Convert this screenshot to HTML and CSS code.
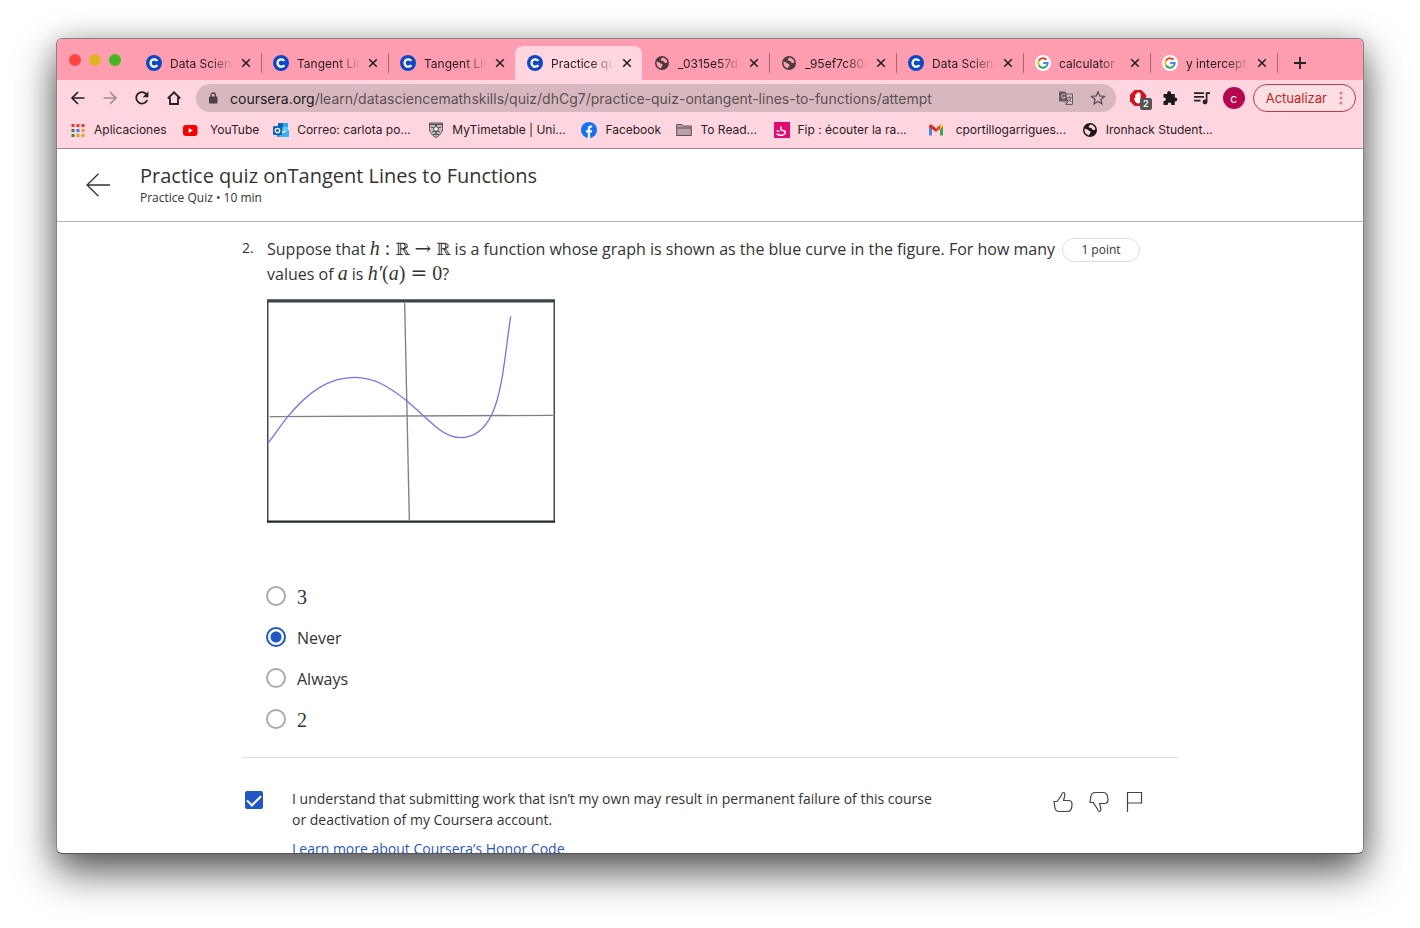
FILE: index.html
```html
<!DOCTYPE html>
<html lang="en">
<head>
<meta charset="utf-8">
<title>Practice quiz onTangent Lines to Functions</title>
<link rel="stylesheet" href="styles.css">
</head>
<body>
<svg class="sprite" aria-hidden="true">
  <symbol id="coursera" viewBox="0 0 16 16"><circle cx="8" cy="8" r="8" fill="#1047c4"/><path d="M11.3 5.9A3.7 3.7 0 1 0 11.3 10.1" fill="none" stroke="#fff" stroke-width="2.3"/></symbol>
  <symbol id="globe" viewBox="0 0 16 16"><circle cx="8" cy="8" r="7" fill="currentColor"/><path d="M2.6 6.6c1.600 1.100 2.800.4 3.700 1.700.8 1.100 2.100.5 2.200 1.600.1 1.300-1.200 1.300-1.500 3.500-2.700-.4-5-2.900-4.400-6.800zM8.200 2.600c-.3 1.200-1.700 1.300-1.500 2.400.3 1.300 2.600.5 3.200 1.700.5 1.300 2 1.500 3.500.9-.2-2.700-2.400-4.900-5.200-5z" fill="var(--hole)"/></symbol>
  <symbol id="google" viewBox="0 0 16 16"><circle cx="8" cy="8" r="8" fill="#fff"/><g fill="none" stroke-width="2"><path d="M11.500 4.700A4.800 4.800 0 0 0 3.800 5.700" stroke="#ea4335"/><path d="M3.800 5.700a4.800 4.800 0 0 0 0 4.600" stroke="#fbbc05"/><path d="M3.800 10.300a4.800 4.800 0 0 0 7.400 1.200" stroke="#34a853"/><path d="M11.200 11.500A4.700 4.700 0 0 0 12.700 8H8.200" stroke="#4285f4"/></g></symbol>
  <symbol id="close" viewBox="0 0 10 10"><path d="M1.200 1.200l7.600 7.600M8.800 1.200L1.200 8.800" stroke="#222" stroke-width="1.600"/></symbol>
</svg>

<div class="window">
  <div class="tabstrip">
    <div class="lights"><span class="light red"></span><span class="light yellow"></span><span class="light green"></span></div>
    <div class="tabs">
      <div class="tab"><svg class="fav"><use href="#coursera"/></svg><span class="tab-title">Data Science</span><button class="close" aria-label="Close tab"><svg><use href="#close"/></svg></button></div>
      <div class="tab"><svg class="fav"><use href="#coursera"/></svg><span class="tab-title">Tangent Lines</span><button class="close" aria-label="Close tab"><svg><use href="#close"/></svg></button></div>
      <div class="tab before-active"><svg class="fav"><use href="#coursera"/></svg><span class="tab-title">Tangent Lines</span><button class="close" aria-label="Close tab"><svg><use href="#close"/></svg></button></div>
      <div class="tab active"><svg class="fav"><use href="#coursera"/></svg><span class="tab-title">Practice quiz</span><button class="close" aria-label="Close tab"><svg><use href="#close"/></svg></button></div>
      <div class="tab"><svg class="fav dim"><use href="#globe"/></svg><span class="tab-title">_0315e57d8</span><button class="close" aria-label="Close tab"><svg><use href="#close"/></svg></button></div>
      <div class="tab"><svg class="fav dim"><use href="#globe"/></svg><span class="tab-title">_95ef7c80c1</span><button class="close" aria-label="Close tab"><svg><use href="#close"/></svg></button></div>
      <div class="tab"><svg class="fav"><use href="#coursera"/></svg><span class="tab-title">Data Science</span><button class="close" aria-label="Close tab"><svg><use href="#close"/></svg></button></div>
      <div class="tab"><svg class="fav"><use href="#google"/></svg><span class="tab-title">calculator - G</span><button class="close" aria-label="Close tab"><svg><use href="#close"/></svg></button></div>
      <div class="tab"><svg class="fav"><use href="#google"/></svg><span class="tab-title">y intercept c</span><button class="close" aria-label="Close tab"><svg><use href="#close"/></svg></button></div>
    </div>
    <button class="new-tab" aria-label="New tab"><svg viewBox="0 0 12 12"><path d="M6 0v12M0 6h12" stroke="#222" stroke-width="1.800"/></svg></button>
  </div>

  <div class="toolbar">
    <div class="nav">
      <button aria-label="Back"><svg viewBox="0 0 16 16"><path d="M14.500 8H2M8 2L2 8l6 6" fill="none" stroke="#222" stroke-width="1.700"/></svg></button>
      <button aria-label="Forward"><svg viewBox="0 0 16 16"><path d="M1.500 8H14M8 2l6 6-6 6" fill="none" stroke="#a28890" stroke-width="1.600"/></svg></button>
      <button aria-label="Reload"><svg viewBox="0 0 16 16"><path d="M13.200 10A5.700 5.700 0 1 1 12.300 4.200" fill="none" stroke="#222" stroke-width="1.800"/><path d="M14.400 1.200v6H8.600z" fill="#222"/></svg></button>
      <button aria-label="Home"><svg viewBox="0 0 16 16"><path d="M1.800 8.500L8 2.300l6.200 6.200M4 7.500V14h8V7.500" fill="none" stroke="#222" stroke-width="1.800"/></svg></button>
    </div>
    <div class="address">
      <svg class="lock" viewBox="0 0 10 12"><rect x="1" y="4.500" width="8.500" height="7" rx="1" fill="#4d4245"/><path d="M3 5V3.200a2.200 2.200 0 0 1 4.400 0V5" fill="none" stroke="#4d4245" stroke-width="1.300"/></svg>
      <span class="url"><span class="host">coursera.org</span>/learn/datasciencemathskills/quiz/dhCg7/practice-quiz-ontangent-lines-to-functions/attempt</span>
      <button aria-label="Translate"><svg viewBox="0 0 16 16"><path d="M6 4h8.500v10.500H8" fill="none" stroke="#655a5d"/><path d="M1 1.500h6.500l2.800 10H1z" fill="#655a5d"/><path d="M7 4.900A2 2 0 1 0 7.300 7H5.500" fill="none" stroke="#d8b8bf" stroke-width="1"/><path d="M9.500 7.500h4M11.500 6.500v1M13 7.500c-.4 2-1.500 3-2.500 3.700M10.500 9l2.700 3M8 11.500v3l2-3" fill="none" stroke="#655a5d" stroke-width=".9"/></svg></button>
      <button aria-label="Bookmark this page"><svg viewBox="0 0 16 16"><path d="M8 1.800l1.800 4.200 4.600.4-3.500 3 1.100 4.500L8 11.500l-4 2.400 1.100-4.500-3.500-3L6.200 6z" fill="none" stroke="#5d5054" stroke-width="1.300"/></svg></button>
    </div>
    <div class="extensions">
      <button class="blocker" aria-label="Ad blocker"><svg viewBox="0 0 16 16"><path d="M4.700 0h6.600L16 4.700v6.600L11.300 16H4.700L0 11.300V4.700z" fill="#d6101c"/><path d="M4 8.300l1.300-.6V4.400q.7-.9 1.300 0V2.900q.7-.9 1.300 0V2.500q.7-.8 1.400 0v1q.7-.8 1.300.1v6.900q0 3-2.700 3-2.100 0-3-2.400z" fill="#fff"/></svg><span class="badge">2</span></button>
      <button aria-label="Extensions"><svg viewBox="0 0 16 16"><path d="M1.500 4h3.700V3a1.900 1.900 0 0 1 3.800 0v1h3.800v3.600h.6a1.900 1.900 0 0 1 0 3.800h-.6V15H9.300v-.7a1.800 1.800 0 0 0-3.600 0v.7H1.500v-4h.7a1.700 1.700 0 0 0 0-3.400h-.7z" fill="#1d181a"/></svg></button>
      <button aria-label="Media controls"><svg viewBox="0 0 16 16"><path d="M0 3.200h10M0 6.900h10M0 10.600h6.500M12.600 12V3.200H16" fill="none" stroke="#222" stroke-width="1.700"/><circle cx="11" cy="12" r="2.400" fill="#222"/></svg></button>
      <button class="avatar" aria-label="Profile">c</button>
      <button class="update">Actualizar<svg viewBox="0 0 4 14"><g fill="#e4787c"><circle cx="2" cy="2" r="1.500"/><circle cx="2" cy="7" r="1.500"/><circle cx="2" cy="12" r="1.500"/></g></svg></button>
    </div>
  </div>

  <nav class="bookmarks">
    <a href="#"><svg viewBox="0 0 16 16"><path d="M1.500 2h3v3h-3zM6.500 2h3v3h-3zM11.500 2h3v3h-3z" fill="#e23b35"/><path d="M1.500 7h3v3h-3zM1.500 12h3v3h-3z" fill="#318a4a"/><path d="M6.500 7h3v3h-3z" fill="#3f7de8"/><path d="M6.500 12h3v3h-3zM11.500 7h3v3h-3zM11.500 12h3v3h-3z" fill="#eb9a27"/></svg>Aplicaciones</a>
    <a href="#" class="roomy"><svg viewBox="0 0 16 16"><rect x="1" y="3" width="14.500" height="11" rx="3" fill="#f40000"/><path d="M6.700 6l4 2.500-4 2.500z" fill="#fff"/></svg>YouTube</a>
    <a href="#"><svg viewBox="0 0 16 16"><path d="M5 1h10v8H5z" fill="#28a8ea"/><path d="M5 1h5v4H5z" fill="#0f64b7"/><path d="M10 5h5v4h-5z" fill="#50d0f5"/><path d="M4 8l6 3.500L16 8v7H4z" fill="#1784d8"/><path d="M4 15L16 8v7z" fill="#35b6f0"/><rect y="4" width="9" height="9" rx="1" fill="#0c63b8"/><circle cx="4.500" cy="8.500" r="2.200" fill="none" stroke="#fff" stroke-width="1.300"/></svg>Correo: carlota po...</a>
    <a href="#"><svg viewBox="0 0 16 16"><path d="M1.500 1h13v5.500c0 4-2.500 6.800-6.500 9-4-2.200-6.500-5-6.500-9z" fill="#c9bfc1" stroke="#50484a"/><path d="M2 2.500h12M3 5l3 1M13 5l-3 1M4 10l3-1M12 10l-3-1M5 12.500h6" stroke="#50484a"/><circle cx="8" cy="7" r="2.300" fill="#fff" stroke="#50484a"/><path d="M7 3.500h2M8 9v4" stroke="#50484a" stroke-width="1.500"/></svg>MyTimetable | Uni...</a>
    <a href="#"><svg viewBox="0 0 16 16"><circle cx="8" cy="8" r="8" fill="#1672ec"/><path d="M6.800 16v-5.400H4.900V8.200h1.900V6.600c0-2.100 1.200-3.100 2.900-3.100l1.500.1v2h-1c-.9 0-1.100.5-1.100 1.100v1.500h2.100l-.4 2.400H9.100V16z" fill="#fff"/></svg>Facebook</a>
    <a href="#"><svg viewBox="0 0 16 16"><path d="M.7 13.500v-11h5l1.300 1.500h8.300v9.500zM.7 6h14.600" fill="#bda0a7" stroke="#5b4d51"/></svg>To Read...</a>
    <a href="#"><svg viewBox="0 0 16 16"><path d="M0 0h16v16H0z" fill="#df0b72"/><path d="M6.800 4.500V7.600c0 1.500 4.400.2 4.400 2.300 0 2.400-2.400 3.300-4.600 3.300-1.800 0-3.200-.5-4-1.400" fill="none" stroke="#fff" stroke-width="1.500"/><path d="M2.500 9c1.500-.2 2.200 0 2.800.8" fill="none" stroke="#fff" stroke-width="1.200"/></svg>Fip : écouter la ra...</a>
    <a href="#" class="roomy"><svg viewBox="0 0 16 16"><path d="M1 4v9.500h3V7z" fill="#4285f4"/><path d="M12 7v6.500h3V4z" fill="#34a853"/><path d="M1 4.500C1 2.500 3 2 4 3l4 3.200V10L1 5z" fill="#d93025"/><path d="M8 6.200L12 3v4l-4 3z" fill="#ea4335"/><path d="M12 3c1.500-1 3 0 3 1.500L12 7z" fill="#fbbc04"/></svg>cportillogarrigues...</a>
    <a href="#"><svg class="dark"><use href="#globe"/></svg>Ironhack Student...</a>
  </nav>

  <main class="page">
    <header class="quiz-header">
      <a href="#" class="back" aria-label="Back"><svg viewBox="0 0 24 24"><path d="M24 12H1M12.500 .7L1 12l11.500 11.300" fill="none" stroke="#333" stroke-width="1.300"/></svg></a>
      <div>
        <h1>Practice quiz onTangent Lines to Functions</h1>
        <p class="subtitle">Practice Quiz • 10 min</p>
      </div>
    </header>

    <form class="quiz">
      <section class="question">
        <div class="number">2.</div>
        <div class="prompt">
          <p>Suppose that <span class="math"><i>h</i> : <span class="set">ℝ</span> <span class="op">→</span> <span class="set">ℝ</span></span> is a function whose graph is shown as the blue curve in the figure. For how many values of <span class="math"><i>a</i></span> is <span class="math"><i>h′</i>(<i>a</i>) <span class="op">=</span> 0</span>?</p>
          <svg class="graph" viewBox="36 27 864 672" role="img" aria-label="Graph of h">
            <path d="M38 30V697M898 30V697" stroke="#444a4e" stroke-width="5"/>
            <path d="M36 32.500H900" stroke="#3a4449" stroke-width="10"/>
            <path d="M36 695H900" stroke="#22282c" stroke-width="7"/>
            <path d="M449 38L463 690M44 380L894 376" fill="none" stroke="#808080" stroke-width="4"/>
            <path d="M40 458C60 434 78 404 99 379C160 305 222 262 300 262C358 262 404 292 455 332C495 366 517 390 548 415C572 434 590 443 616 443C660 443 692 412 711 372C743 305 750 192 767 79" fill="none" stroke="#7b70f0" stroke-width="4"/>
          </svg>
          <fieldset class="options">
            <label><input type="radio" name="answer"><span class="math">3</span></label>
            <label><input type="radio" name="answer" checked><span>Never</span></label>
            <label><input type="radio" name="answer"><span>Always</span></label>
            <label><input type="radio" name="answer"><span class="math">2</span></label>
          </fieldset>
        </div>
        <div class="points">1 point</div>
      </section>

      <section class="honor">
        <input type="checkbox" id="agree" checked>
        <div class="honor-text">
          <label for="agree">I understand that submitting work that isn’t my own may result in permanent failure of this course or deactivation of my Coursera account.</label>
          <a href="#">Learn more about Coursera’s Honor Code</a>
        </div>
        <div class="feedback">
          <button type="button" aria-label="Like"><svg viewBox="0 0 20 22"><path d="M1 10.500h3.200L8.500 4c.3-1.700.8-2.500 1.800-2.500 1.500 0 1.800 1.500 1.400 3.200L10.600 9.500h4.900c2.400 0 3.500 1.700 3.500 3.700 0 4.700-1.700 7.300-4.500 7.300H6c-2.600 0-3.800-1.700-4.200-4.500z"/></svg></button>
          <button type="button" aria-label="Dislike"><svg viewBox="0 0 20 22"><path d="M1 11.500h3.200L8.500 18c.3 1.700.8 2.500 1.800 2.500 1.500 0 1.800-1.500 1.400-3.200l-1.100-4.800h4.900c2.400 0 3.500-1.700 3.500-3.700 0-4.700-1.700-7.300-4.500-7.300H6C3.400 1.500 2.200 3.200 1.800 6z"/></svg></button>
          <button type="button" aria-label="Flag"><svg viewBox="0 0 20 22"><path d="M2.500 21V1.500h14v10.500h-14"/></svg></button>
        </div>
      </section>
    </form>
  </main>
</div>
</body>
</html>
```

FILE: styles.css
```css
* { box-sizing: border-box; }

body {
  margin: 0;
  height: 100vh;
  padding: 38px 56px 74px;
  background: #fff;
  color: #333;
  font-family: "Open Sans", sans-serif;
  overflow: hidden;
}

h1, p { margin: 0; font-weight: 400; }
button { padding: 0; border: 0; background: none; font: inherit; color: inherit; }
svg { display: block; flex: none; }
.sprite { display: none; }

.window {
  height: 100%;
  display: flex;
  flex-direction: column;
  overflow: hidden;
  border: 1px solid #8a8083;
  border-bottom-color: #555;
  border-radius: 6px;
  background: #fff;
  box-shadow: 0 18px 40px rgba(0, 0, 0, .65), 0 0 24px rgba(0, 0, 0, .15);
}

/* Browser chrome */
.tabstrip, .toolbar, .bookmarks {
  flex: none;
  font-family: Inter, sans-serif;
  font-size: 12px;
  color: #2a2023;
}

.tabstrip {
  height: 41px;
  display: flex;
  align-items: flex-end;
  background: #ff9db0;
  --hole: #ff9db0;
}

.lights { display: flex; gap: 8px; width: 77px; padding: 0 0 14px 12px; }
.light { width: 12px; height: 12px; border-radius: 50%; }
.red { background: #ff4645; }
.yellow { background: #dfb423; }
.green { background: #44b824; }

.tabs { display: flex; flex: 0 1 1143px; min-width: 0; }
.tab {
  position: relative;
  flex: 1 1 0;
  min-width: 0;
  height: 34px;
  display: flex;
  align-items: center;
  gap: 8px;
  padding: 0 10px 0 12px;
}
.tab::after {
  content: "";
  position: absolute;
  right: -1px;
  top: 7px;
  width: 1px;
  height: 20px;
  background: #a36872;
}
.tab.active::after, .tab.before-active::after { display: none; }
.tab.active { background: #ffd5df; border-radius: 8px 8px 0 0; }
.tab-title {
  flex: 1;
  overflow: hidden;
  white-space: nowrap;
  -webkit-mask-image: linear-gradient(90deg, #000 65%, transparent);
  mask-image: linear-gradient(90deg, #000 65%, transparent);
}
.fav { width: 16px; height: 16px; }
.dim { color: #4a3a3e; }
.dark { color: #1d181a; }
.close svg { width: 10px; height: 10px; }
.new-tab { margin: 0 0 11px 17px; }
.new-tab svg { width: 12px; height: 12px; }

.toolbar {
  height: 36px;
  display: flex;
  align-items: center;
  padding: 0 7px 0 13px;
  background: #ffd5df;
}
.nav { display: flex; gap: 16px; margin-right: 14px; }
.nav svg, .address button svg, .extensions svg { width: 16px; height: 16px; }
.address {
  flex: 1;
  min-width: 0;
  height: 28px;
  display: flex;
  align-items: center;
  gap: 16px;
  padding: 0 10px 0 12px;
  border-radius: 14px;
  background: #d8b8bf;
}
.lock { width: 10px; height: 12px; margin-right: -4px; }
.url { flex: 1; overflow: hidden; white-space: nowrap; font-size: 14px; color: #5d5054; }
.host { color: #221b1d; }
.extensions { display: flex; align-items: center; gap: 16px; margin-left: 14px; }
.extensions .blocker { position: relative; }
.badge {
  position: absolute;
  left: 10px;
  top: 8px;
  width: 12px;
  height: 12px;
  border-radius: 2px;
  background: #555;
  color: #fff;
  font-size: 9px;
  font-weight: 600;
  line-height: 12px;
}
.avatar { width: 22px; height: 22px; margin: 0 -8px 0 -3px; border-radius: 50%; background: #b5064f; color: #fff; }
.update {
  height: 28px;
  display: flex;
  align-items: center;
  gap: 12px;
  padding: 0 6px 0 12px;
  border: 1px solid #c9343c;
  border-radius: 14px;
  background: #fbdfe2;
  color: #c5221f;
  font-size: 13px;
}
.extensions .update svg { width: 4px; height: 14px; margin-right: 6px; }

.bookmarks {
  height: 33px;
  display: grid;
  grid-template-columns: 112fr 91fr 155fr 153fr 95fr 97fr 154fr 154fr 281fr;
  padding: 0 0 5px 13px;
  border-bottom: 1px solid #a08a90;
  background: #ffd5df;
  --hole: #ffd5df;
}
.bookmarks a {
  display: flex;
  align-items: center;
  gap: 8px;
  min-width: 0;
  white-space: nowrap;
  color: inherit;
  text-decoration: none;
}
.bookmarks .roomy { gap: 12px; }
.bookmarks svg { width: 16px; height: 16px; }

/* Quiz page */
.page { flex: 1; min-height: 0; overflow: hidden; }
.quiz-header {
  height: 73px;
  display: flex;
  align-items: center;
  gap: 30px;
  padding-left: 29px;
  border-bottom: 1px solid #b5b5b5;
}
.back svg { width: 24px; height: 24px; }
h1 { font-size: 20px; line-height: 26px; }
.subtitle { font-size: 12px; line-height: 18px; }

.quiz { max-width: 936px; margin: 0 auto; }
.question {
  display: flex;
  align-items: flex-start;
  padding: 15px 38px 18px 0;
  border-bottom: 1px solid #ddd;
}
.number { width: 25px; flex: none; font-size: 14px; line-height: 22px; }
.prompt { flex: 1; min-width: 0; }
.prompt p { font-size: 16px; line-height: 25px; }
.math { font-family: "Liberation Serif", "DejaVu Serif", serif; font-size: 20px; line-height: 1; }
.set { font-size: 17px; }
.op { font-family: "DejaVu Serif", serif; }
.graph { width: 288px; height: 224px; margin-top: 12px; }
.points {
  flex: none;
  width: 78px;
  height: 24px;
  margin-top: 1px;
  border: 1px solid #ddd;
  border-radius: 12px;
  font-size: 12px;
  line-height: 22px;
  text-align: center;
}
.options { margin: 52px 0 0; padding: 0; border: 0; }
.options label {
  height: 41px;
  display: flex;
  align-items: center;
  gap: 11px;
  font-size: 16px;
}
.options span { padding-top: 2px; }
.options input {
  appearance: none;
  width: 20px;
  height: 20px;
  margin: 0 0 0 -1px;
  border: 2px solid #aaa;
  border-radius: 50%;
}
.options input:checked {
  border-color: #1f57c3;
  background: radial-gradient(circle, #1f57c3 5px, #fff 6px);
}

.honor {
  display: flex;
  align-items: flex-start;
  padding: 30px 33px 30px 3px;
}
.honor input {
  appearance: none;
  flex: none;
  width: 18px;
  height: 18px;
  margin: 3px 29px 0 0;
  border-radius: 2px;
  background: #1f57c3;
  display: grid;
  place-items: center;
}
.honor input:checked::after {
  content: "";
  width: 12px;
  height: 6px;
  border: solid #fff;
  border-width: 0 0 2px 2px;
  transform: translateY(-1px) rotate(-45deg);
}
.honor-text { width: 648px; font-size: 14px; line-height: 21px; }
.honor-text label { display: block; }
.honor-text a { display: inline-block; margin-top: 8px; color: #1f57c3; text-decoration: underline; }
.feedback { display: flex; gap: 16px; margin: 3px 0 0 auto; }
.feedback svg { width: 20px; height: 22px; fill: none; stroke: #444; stroke-width: 1.2; }
```
